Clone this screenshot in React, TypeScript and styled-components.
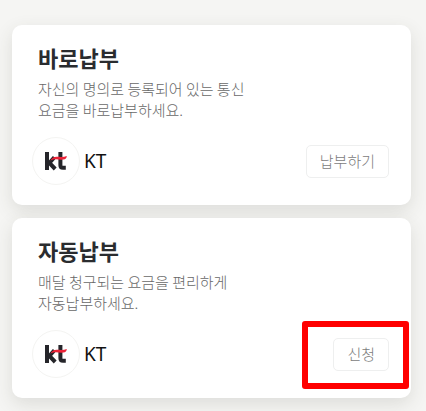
import React from "react";
import styled, { createGlobalStyle } from "styled-components";

const GlobalStyle = createGlobalStyle`
  * { box-sizing: border-box; }
  body {
    margin: 0;
    background: #f5f5f3;
    font-family: "Noto Sans CJK KR", "Noto Sans", sans-serif;
    overflow: hidden;
  }
`;

const Page = styled.main`
  display: flex;
  flex-direction: column;
  gap: 13px;
  height: 100vh;
  overflow: hidden;
  padding: 25px 15px 0 12px;
`;

const Card = styled.section`
  flex: none;
  padding: 18px 22px 20px 20px;
  border-radius: 10px;
  background: #fff;
  box-shadow: 0 6px 18px rgba(60, 60, 50, 0.13);
`;

const Title = styled.h2`
  margin: 0 0 7px 6px;
  font-size: 22px;
  line-height: 28px;
  font-weight: 700;
  color: #2a2c2f;
`;

const Description = styled.p`
  max-width: 220px;
  margin: 0 0 17px 6px;
  font-size: 15px;
  line-height: 21px;
  font-weight: 300;
  color: #686868;
  word-break: keep-all;
`;

const ProviderRow = styled.div`
  display: flex;
  align-items: center;
`;

const LogoCircle = styled.span`
  display: grid;
  place-items: center;
  width: 48px;
  height: 48px;
  border: 1px solid #f4f4f2;
  border-radius: 50%;
`;

const ProviderName = styled.span`
  flex: 1;
  margin-left: 4px;
  font-family: "Noto Sans", sans-serif;
  font-size: 19px;
  line-height: 24px;
  color: #111;
`;

const ActionArea = styled.div`
  position: relative;
`;

const ActionButton = styled.button`
  display: block;
  height: 33px;
  padding: 0 13px;
  border: 1px solid #eeefef;
  border-radius: 5px;
  background: #fff;
  font: inherit;
  font-size: 15px;
  line-height: 20px;
  font-weight: 300;
  color: #7c7c7c;
  cursor: pointer;
`;

const Highlight = styled.span`
  position: absolute;
  inset: -17px -20px -18px -31px;
  border: 6px solid #f00;
  border-radius: 3px;
  pointer-events: none;
`;

function KtLogo() {
  return (
    <svg width="24" height="20" viewBox="0 0 24 20" fill="none" aria-hidden="true">
      <path d="M3 1V19" stroke="#25252a" strokeWidth="4" />
      <path d="M10.4 6.2 5.4 12l5.8 6" stroke="#25252a" strokeWidth="4" />
      <path d="M16.4 1V14.2q0 2.6 2.6 2.6h2.8" stroke="#25252a" strokeWidth="4" />
      <path d="M6.4 9.6C8.6 5.4 11.5 5.4 15 5.8c3 .3 5 .3 7.8-.7-.2 2.3-1.2 3.3-3.4 3.5-4.7.4-8.8-1.3-13 1Z" fill="#ec2338" />
    </svg>
  );
}

interface PaymentCardProps {
  title: string;
  description: string;
  action: string;
  highlighted?: boolean;
}

function PaymentCard({ title, description, action, highlighted }: PaymentCardProps) {
  return (
    <Card>
      <Title>{title}</Title>
      <Description>{description}</Description>
      <ProviderRow>
        <LogoCircle><KtLogo /></LogoCircle>
        <ProviderName>KT</ProviderName>
        <ActionArea>
          <ActionButton type="button">{action}</ActionButton>
          {highlighted && <Highlight />}
        </ActionArea>
      </ProviderRow>
    </Card>
  );
}

export default function App() {
  return (
    <>
      <GlobalStyle />
      <Page>
        <PaymentCard
          title="바로납부"
          description="자신의 명의로 등록되어 있는 통신 요금을 바로납부하세요."
          action="납부하기"
        />
        <PaymentCard
          title="자동납부"
          description="매달 청구되는 요금을 편리하게 자동납부하세요."
          action="신청"
          highlighted
        />
      </Page>
    </>
  );
}
